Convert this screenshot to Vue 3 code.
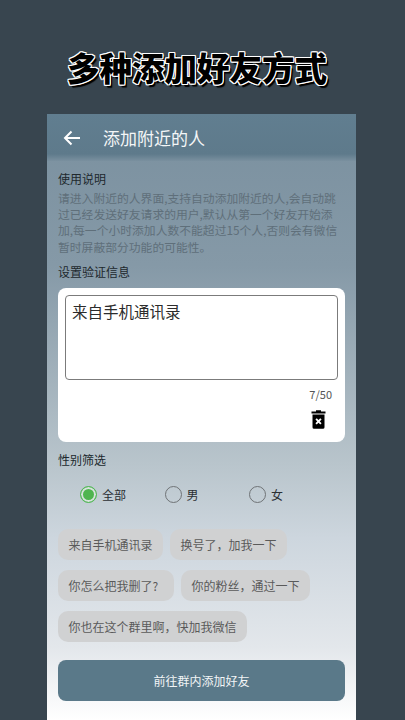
<template>
  <div class="page">
    <h1 class="headline">多种添加好友方式</h1>

    <div class="phone">
      <div class="topbar">
        <svg class="back" viewBox="0 0 18 16" width="18" height="16">
          <path d="M17 8H2M8.5 1.5 2 8l6.5 6.5" fill="none" stroke="#fff" stroke-width="2" />
        </svg>
        <span class="topbar-title">添加附近的人</span>
      </div>

      <div class="content">
        <div class="label">使用说明</div>
        <p class="desc">{{ desc }}</p>

        <div class="label verify-label">设置验证信息</div>
        <div class="card">
          <div class="input-box">来自手机通讯录</div>
          <div class="count">7/50</div>
          <div class="trash-row">
            <svg class="trash" viewBox="0 0 14 20" width="15" height="20">
              <path d="M4.5 1.2h5V2.6H14v1.8H0V2.6h4.5z" fill="#000" />
              <path d="M1 5.6h12v12.6A1.6 1.6 0 0 1 11.4 19.8H2.6A1.6 1.6 0 0 1 1 18.2z" fill="#000" />
              <path d="M4.6 9.8l4.8 5M9.4 9.8l-4.8 5" stroke="#fff" stroke-width="1.9" fill="none" />
            </svg>
          </div>
        </div>

        <div class="label gender-label">性别筛选</div>
        <div class="radios">
          <div v-for="item in genders" :key="item.name" class="radio">
            <span class="dot" :class="{ on: item.on }"></span>
            <span>{{ item.name }}</span>
          </div>
        </div>

        <div class="chips">
          <span v-for="chip in chips" :key="chip" class="chip">{{ chip }}</span>
        </div>

        <button class="go">前往群内添加好友</button>
      </div>
    </div>
  </div>
</template>

<script setup>
const desc = '请进入附近的人界面,支持自动添加附近的人,会自动跳过已经发送好友请求的用户,默认从第一个好友开始添加,每一个小时添加人数不能超过15个人,否则会有微信暂时屏蔽部分功能的可能性。'

const genders = [
  { name: '全部', on: true },
  { name: '男', on: false },
  { name: '女', on: false }
]

const chips = [
  '来自手机通讯录',
  '换号了，加我一下',
  '你怎么把我删了?\u00a0\u00a0',
  '你的粉丝，通过一下',
  '你也在这个群里啊，快加我微信'
]
</script>

<style scoped>
.page {
  width: 405px;
  height: 720px;
  overflow: hidden;
  box-sizing: border-box;
  padding-right: 2px;
  background: #38454f;
  font-family: "Noto Sans CJK SC", "Noto Sans", sans-serif;
  display: flex;
  flex-direction: column;
  align-items: center;
}

.headline {
  margin: 45px 9px 0 0;
  height: 69px;
  font-size: 32.5px;
  line-height: 44px;
  font-weight: 900;
  color: #000;
  /* white rim first, then the black drop behind it */
  text-shadow:
    1px 0 0 #fff, -1px 0 0 #fff, 0 1px 0 #fff, 0 -1px 0 #fff,
    1px 1px 0 #fff, -1px 1px 0 #fff, 1px -1px 0 #fff, -1px -1px 0 #fff,
    2px 2px 0 #000, 2.5px 2.5px 1px #000;
  white-space: nowrap;
}

.phone {
  width: 309px;
  flex: 1;
  background: linear-gradient(180deg, #7a909f 0%, #8599a7 25%, #b9c5cc 58%, #cdd6de 70%, #e3e7eb 88%, #ffffff 100%);
}

.topbar {
  height: 47px;
  display: flex;
  align-items: center;
  padding-left: 16px;
  background: linear-gradient(180deg, #617e90 0%, #5e7a8b 85%, #7a909f 100%);
}

.back {
  margin-right: 22px;
}

.topbar-title {
  color: #f4f6f7;
  font-size: 17px;
}

.content {
  padding: 10px 11px 0;
}

.label {
  font-size: 12px;
  line-height: 16px;
  color: #20282d;
}

.desc {
  margin: 3px 0 0;
  width: 288px;
  font-size: 11.8px;
  line-height: 16.2px;
  color: #5f6f7a;
}

.verify-label {
  margin-top: 9px;
}

.card {
  margin-top: 8px;
  height: 154px;
  padding: 7px 7px 0;
  box-sizing: border-box;
  background: #fff;
  border-radius: 8px;
}

.input-box {
  height: 85px;
  box-sizing: border-box;
  padding: 4px 6px;
  border: 1px solid #7b7b7b;
  border-radius: 4px;
  font-size: 15.5px;
  line-height: 22px;
  color: #2c2c2c;
}

.count {
  margin-top: 7px;
  padding-right: 6px;
  text-align: right;
  font-size: 11px;
  line-height: 14px;
  color: #555;
}

.trash-row {
  display: flex;
  justify-content: flex-end;
  margin-top: 8px;
  padding-right: 12px;
}

.label.gender-label {
  margin-top: 10px;
}

.radios {
  display: flex;
  margin-top: 18px;
  padding-left: 22px;
}

.radio {
  width: 84.5px;
  display: flex;
  align-items: center;
  gap: 5px;
  font-size: 12px;
  line-height: 18px;
  color: #2b2f33;
}

.dot {
  width: 17px;
  height: 17px;
  box-sizing: border-box;
  border: 1.5px solid #6f7376;
  border-radius: 50%;
}

.dot.on {
  border-color: #55b95a;
  background: #4fb54f;
  box-shadow: inset 0 0 0 2px #d7e2dc;
}

.chips {
  display: flex;
  flex-wrap: wrap;
  gap: 10px 7px;
  margin-top: 25px;
}

.chip {
  height: 31px;
  padding: 0 10.5px;
  display: flex;
  align-items: center;
  white-space: pre;
  background: #d0d1d2;
  border-radius: 10px;
  font-size: 12px;
  color: #5a5a5a;
}

.go {
  display: block;
  width: 100%;
  height: 41px;
  margin-top: 18px;
  border: 0;
  border-radius: 8px;
  background: #5a7989;
  color: #f2f5f6;
  font-family: inherit;
  font-size: 12px;
}
</style>
